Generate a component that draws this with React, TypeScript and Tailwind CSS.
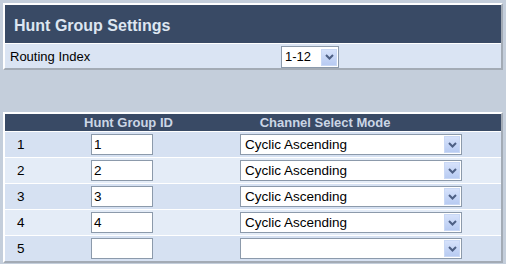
import React from "react";

const Chevron = () => (
  <svg width="9" height="6" viewBox="0 0 9 6">
    <path d="M1 1 L4.5 4.5 L8 1" stroke="#4d5f84" strokeWidth="2" fill="none" />
  </svg>
);

const ArrowBox = () => (
  <div className="w-[16px] h-[17px] my-auto mr-[1px] flex items-center justify-center bg-gradient-to-b from-[#d6e2fb] to-[#b8cbf2] border border-[#c9d8f5]">
    <Chevron />
  </div>
);

const Select = ({ value, w }: { value: string; w: string }) => (
  <div className={`${w} h-[21px] bg-white border border-[#8c9aab] flex items-stretch`}>
    <div className="flex-1 pl-[4px] text-[13.5px] leading-[19px] text-black">{value}</div>
    <ArrowBox />
  </div>
);

const rows = [
  { n: "1", id: "1", mode: "Cyclic Ascending" },
  { n: "2", id: "2", mode: "Cyclic Ascending" },
  { n: "3", id: "3", mode: "Cyclic Ascending" },
  { n: "4", id: "4", mode: "Cyclic Ascending" },
  { n: "5", id: "", mode: "" },
];

export default function App() {
  return (
    <div
      className="w-[506px] h-[264px] bg-[#c4cedb] overflow-hidden pt-[3px] pl-[3px]"
      style={{ fontFamily: '"Liberation Sans", Arial, sans-serif' }}
    >
      <div className="w-[500px] border-2 border-t-white border-l-white border-r-[#a3abb5] border-b-[#a3abb5] bg-white">
        <div className="h-[38px] bg-[#394a65] flex items-center pl-[9px] pt-[3px]">
          <span className="text-[16px] font-bold text-[#dde6f1]">Hunt Group Settings</span>
        </div>
        <div className="h-[1px] bg-white" />
        <div className="h-[24px] bg-[#dae4f3] flex items-center">
          <div className="w-[276px] pl-[5px] pt-[1px] text-[13px] text-black">Routing Index</div>
          <div className="w-[58px] h-[22px] mt-[2px] bg-white border border-[#8c9aab] flex items-stretch">
            <div className="flex-1 pl-[3px] text-[13px] leading-[20px] text-black">1-12</div>
            <ArrowBox />
          </div>
        </div>
      </div>

      <div className="mt-[42px] w-[500px] border-2 border-t-white border-l-white border-r-[#a3abb5] border-b-[#a3abb5] bg-white">
        <div className="h-[17px] bg-[#394a65] flex items-center text-[13px] font-bold text-[#cbd6e5]">
          <div className="w-[247px] text-center">Hunt Group ID</div>
          <div className="w-[146px] text-center">Channel Select Mode</div>
        </div>
        {rows.map((r, i) => (
          <div
            key={r.n}
            className={`h-[26px] border-t border-white flex items-center ${
              i % 2 === 0 ? "bg-[#d6e1f2]" : "bg-[#e4ecf7]"
            }`}
          >
            <div className="w-[86px] pl-[12px] pt-[1px] text-[13.5px] text-black">{r.n}</div>
            <div className="w-[62px] h-[21px] bg-white border border-[#8c9aab] pl-[2px] text-[13.5px] leading-[19px] text-black">
              {r.id}
            </div>
            <div className="w-[87px]" />
            <Select value={r.mode} w="w-[222px]" />
          </div>
        ))}
      </div>
    </div>
  );
}
